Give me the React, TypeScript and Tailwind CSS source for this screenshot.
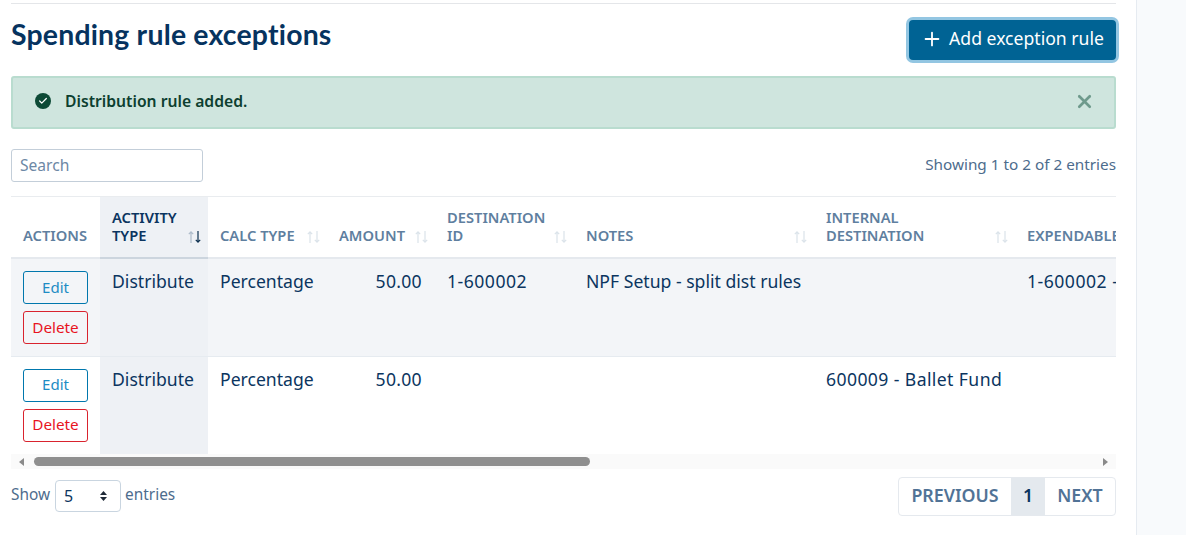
import { Plus, X, Check } from "lucide-react";

const font = "font-['Noto_Sans',sans-serif]";

function SortIcon({ active }: { active?: boolean }) {
  return (
    <svg width="15" height="14" viewBox="0 0 15 14" className="shrink-0">
      <path d="M4 13V2M1.8 4.2 4 1.8l2.2 2.4" fill="none" stroke={active ? "#aebccb" : "#dbe3ea"} strokeWidth="1.2" />
      <path d="M11 1v11M8.8 9.8 11 12.2l2.2-2.4" fill="none" stroke={active ? "#0b2f4f" : "#dbe3ea"} strokeWidth="1.2" />
    </svg>
  );
}

function Th({ label, w, active }: { label: string; w: string; active?: boolean }) {
  return (
    <th className={`${w} ${active ? "bg-[#eef1f5] text-[#0b3560] border-b-[#ccd5de]" : "text-[#5f7f9f]"} border-b-2 border-[#e5e9ee] pl-3 pr-1.5 pb-[13px] pt-[11px] align-bottom text-left text-[14.7px] font-semibold leading-[18px]`}>
      <div className="flex items-end justify-between">
        <span>{label}</span>
        <SortIcon active={active} />
      </div>
    </th>
  );
}

function ActionBtns() {
  return (
    <div className="flex w-[65px] flex-col gap-[7px]">
      <button className="h-[33px] rounded-[3px] border border-[#0077ad] pb-px text-[15px] text-[#1e8cc4]">Edit</button>
      <button className="h-[33px] rounded-[3px] border border-[#d9232e] pb-px text-[15.3px] text-[#e8141f]">Delete</button>
    </div>
  );
}

const td = "pl-3 pt-[10px] align-top text-[17.6px] leading-[24px] text-[#0b3560] whitespace-nowrap overflow-hidden";

export default function App() {
  return (
    <div className={`${font} flex h-[535px] w-[1186px] overflow-hidden bg-white`}>
      <main className="w-[1137px] shrink-0 border-r border-[#e6ebf1] pl-[11px] pr-5 pt-[3px]">
        <hr className="border-[#e4e6e9]" />
        <div className="flex items-start justify-between pt-[13px]">
          <h1 className="font-['Lato',sans-serif] text-[28.4px] font-bold leading-[34px] tracking-[0.2px] text-[#06335f]">Spending rule exceptions</h1>
          <button className="-mr-[3px] flex h-[46px] w-[213px] items-center justify-center gap-[6px] rounded-[7px] border-[3px] border-[#93c6e2] bg-[#006394] pb-[3px] text-[17.6px] text-white">
            <Plus size={22} strokeWidth={2} />
            Add exception rule
          </button>
        </div>
        <div className="mt-[13px] flex h-[53px] items-center justify-between rounded-[3px] border-2 border-[#b9dccf] bg-[#cfe5de] pb-[2px] pl-[22px] pr-[19px]">
          <div className="flex items-center gap-[14px]">
            <span className="flex h-4 w-4 items-center justify-center rounded-full bg-[#0d4a36]">
              <Check size={10} strokeWidth={3} className="text-white" />
            </span>
            <span className="text-[15.7px] font-semibold text-[#0d3f30]">Distribution rule added.</span>
          </div>
          <X size={21} strokeWidth={3} className="text-[#6e9a8c]" />
        </div>
        <div className="mt-5 flex items-center justify-between">
          <div className="flex h-[33px] w-[192px] items-center rounded-[3px] border border-[#c3ced9] pl-2 pt-px text-[15.6px] text-[#6d88a5]">Search</div>
          <span className="-mt-[3px] text-[15.3px] text-[#4d6c8d]">Showing 1 to 2 of 2 entries</span>
        </div>
        <div className="mt-[14px] overflow-hidden border-t border-[#e9ecef]">
          <table className="w-[1240px] table-fixed border-collapse">
            <thead>
              <tr className="h-[61px]">
                <th className="w-[89px] border-b-2 border-[#e5e9ee] pb-[13px] pl-3 text-left align-bottom text-[14.7px] font-semibold leading-[18px] text-[#5f7f9f]">ACTIONS</th>
                <Th label="ACTIVITY TYPE" w="w-[108px]" active />
                <Th label="CALC TYPE" w="w-[119px]" />
                <Th label="AMOUNT" w="w-[108px]" />
                <Th label="DESTINATION ID" w="w-[139px]" />
                <Th label="NOTES" w="w-[240px]" />
                <Th label="INTERNAL DESTINATION" w="w-[201px]" />
                <th className="w-[236px] border-b-2 border-[#e5e9ee] pb-[13px] pl-3 text-left align-bottom text-[14.7px] font-semibold leading-[18px] text-[#5f7f9f]">EXPENDABLE</th>
              </tr>
            </thead>
            <tbody>
              <tr className="h-[98px] border-b border-[#e6ebf0] bg-[#f3f5f8]">
                <td className="pl-3 pt-3 align-top"><ActionBtns /></td>
                <td className={`${td} bg-[#eef1f5]`}>Distribute</td>
                <td className={td}>Percentage</td>
                <td className={`${td} pr-[13px] text-right tracking-[0.3px]`}>50.00</td>
                <td className={`${td} tracking-[0.5px]`}>1-600002</td>
                <td className={td}>NPF Setup - split dist rules</td>
                <td className={td}></td>
                <td className={`${td} tracking-[0.5px]`}>1-600002 - General Fund</td>
              </tr>
              <tr className="h-[98px]">
                <td className="pl-3 pt-3 align-top"><ActionBtns /></td>
                <td className={`${td} bg-[#eef1f5]`}>Distribute</td>
                <td className={td}>Percentage</td>
                <td className={`${td} pr-[13px] text-right tracking-[0.3px]`}>50.00</td>
                <td className={td}></td>
                <td className={td}></td>
                <td className={`${td} tracking-[0.4px]`}>600009 - Ballet Fund</td>
                <td className={td}></td>
              </tr>
            </tbody>
          </table>
        </div>
        <div className="flex h-[15px] items-center justify-between bg-[#fafafa] pl-[8px] pr-[8px]">
          <div className="flex items-center">
            <span className="h-0 w-0 border-y-[4px] border-r-[5px] border-y-transparent border-r-[#8a8a8a]" />
            <span className="ml-[10px] h-[9px] w-[556px] rounded-full bg-[#8f8f8f]" />
          </div>
          <span className="h-0 w-0 border-y-[4px] border-l-[5px] border-y-transparent border-l-[#8a8a8a]" />
        </div>
        <div className="mt-2 flex items-start justify-between">
          <div className="mt-[3px] flex items-center gap-1 text-[15.4px] text-[#4d6c8d]">
            <span className="pb-[2px]">Show</span>
            <div className="ml-px flex h-[32px] w-[66px] items-center justify-between rounded-[4px] border border-[#c9d5e0] pb-px pl-2 pr-[12px] text-[16px] text-[#0b3560]">
              5
              <svg width="9" height="12" viewBox="0 0 9 12"><path d="M4.5 1 8 5H1zM4.5 11 1 7h7z" fill="#1f2937" /></svg>
            </div>
            <span className="pb-[2px]">entries</span>
          </div>
          <div className="flex h-[39px] items-stretch overflow-hidden rounded-[4px] border border-[#e5e9ee] text-[17.8px] font-semibold">
            <span className="flex w-[112px] items-center justify-center pb-[2px] text-[#517396]">PREVIOUS</span>
            <span className="flex w-[34px] items-center justify-center bg-[#e4e9ee] pb-[2px] text-[#0b3560]">1</span>
            <span className="flex w-[70px] items-center justify-center pb-[2px] text-[#517396]">NEXT</span>
          </div>
        </div>
      </main>
      <div className="flex-1 bg-[#f8fafc]" />
    </div>
  );
}
